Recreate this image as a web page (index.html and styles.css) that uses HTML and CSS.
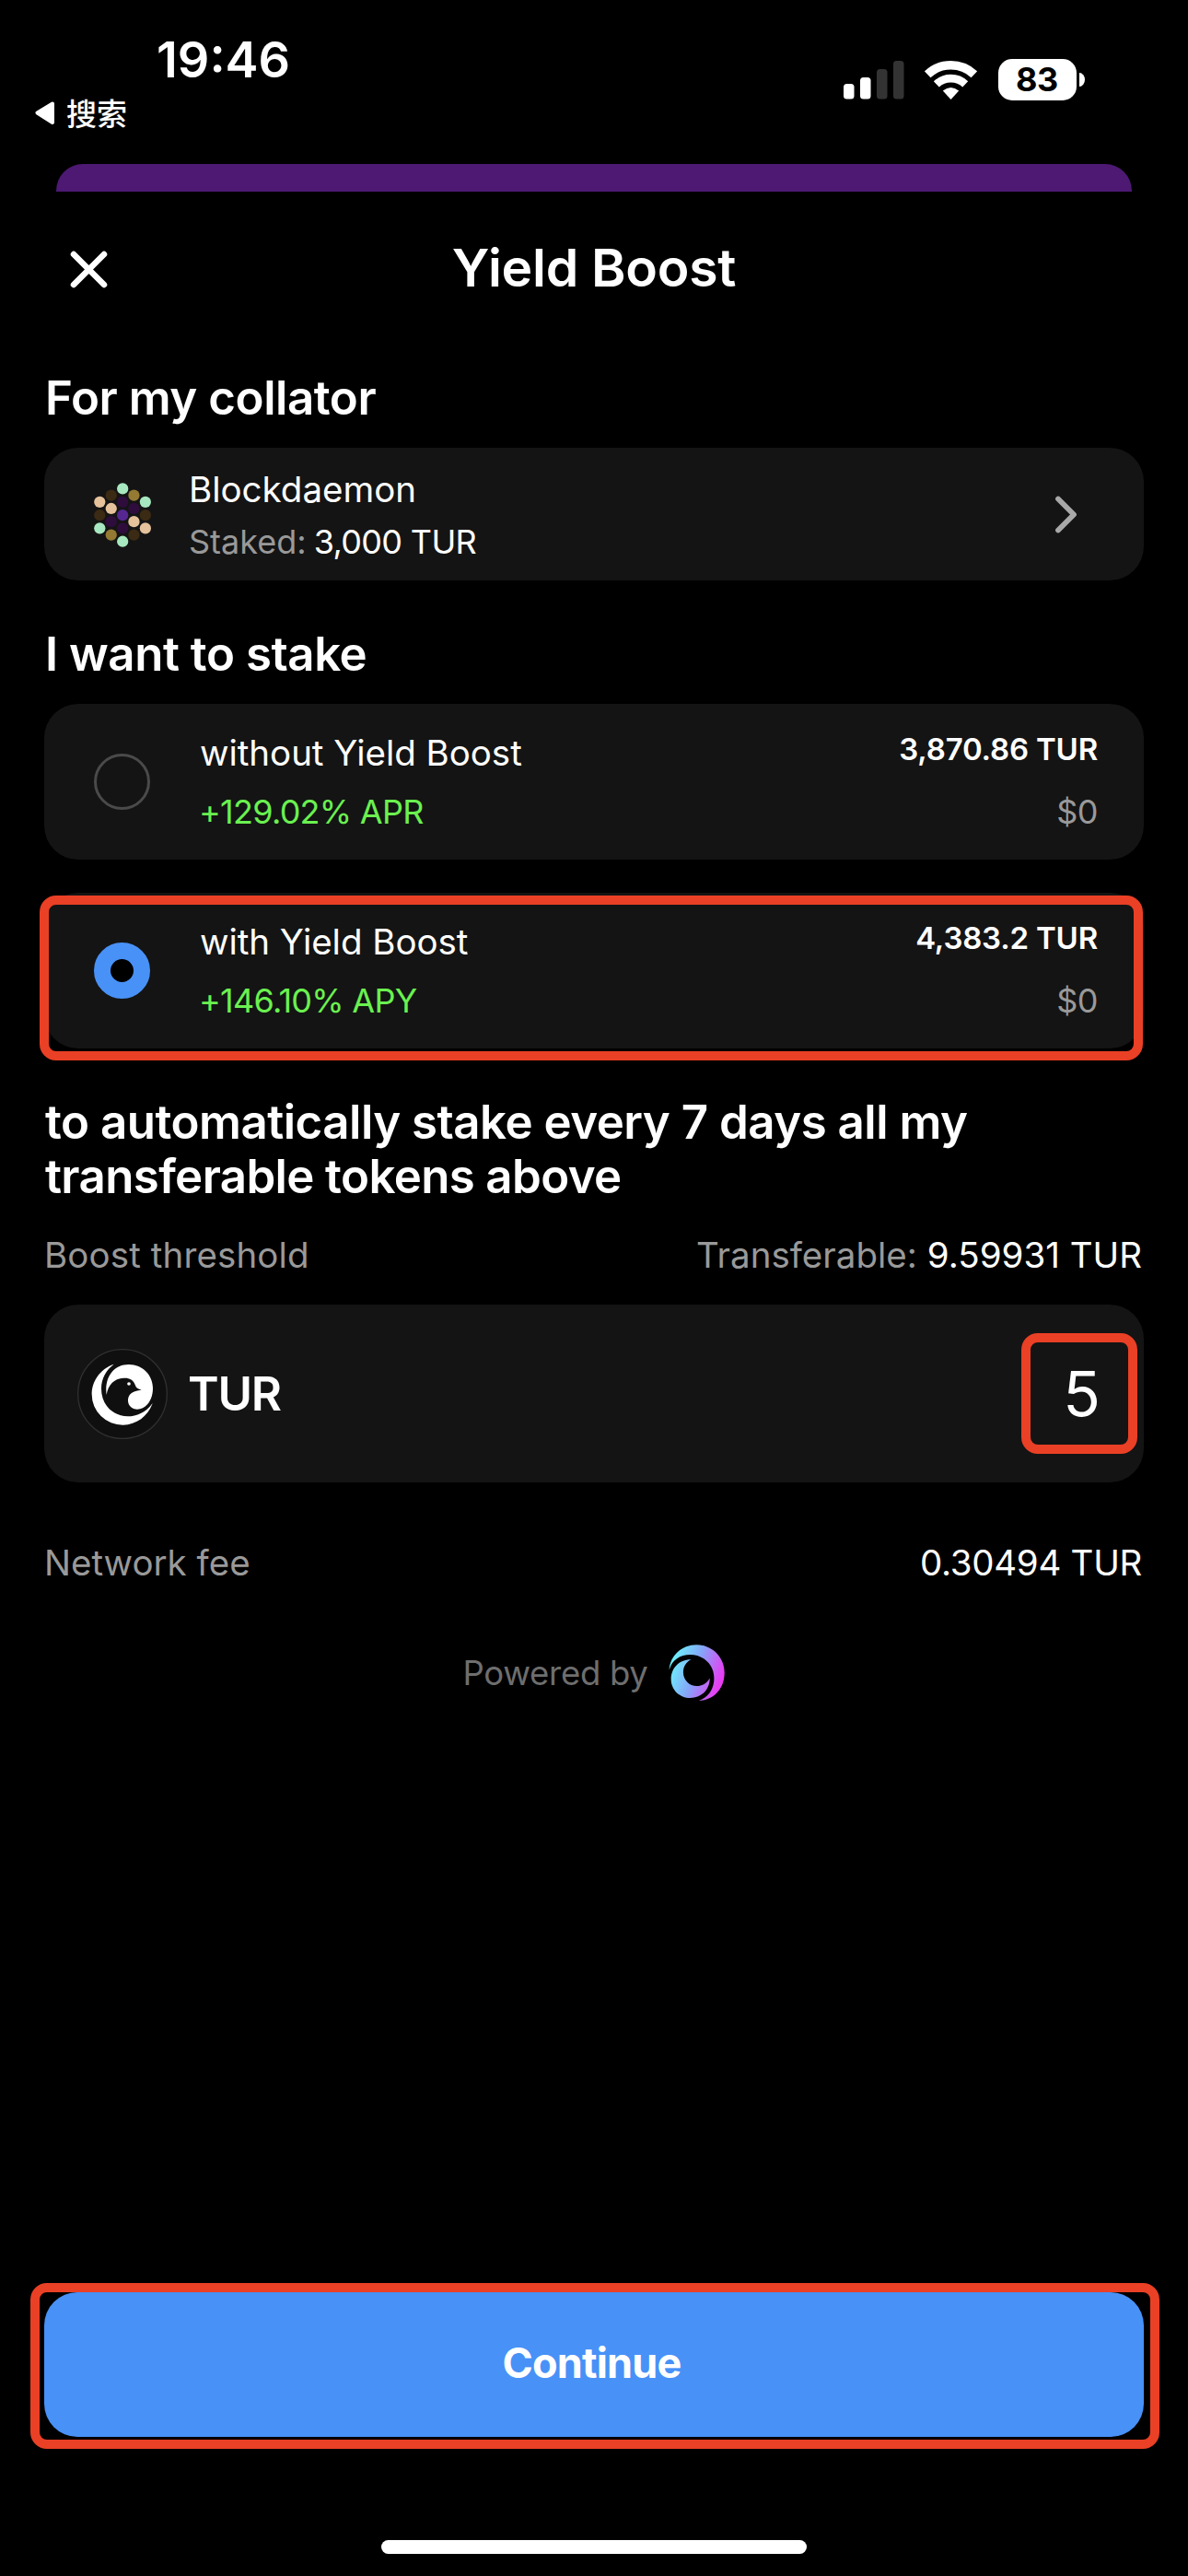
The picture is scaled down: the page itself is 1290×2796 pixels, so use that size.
FILE: index.html
```html
<!DOCTYPE html>
<html lang="en">
<head>
<meta charset="utf-8">
<title>Yield Boost</title>
<link rel="stylesheet" href="styles.css">
</head>
<body>
<div class="screen">
  <div class="status">
    <div class="status-left">
      <div class="time">19:46</div>
      <div class="back">
        <svg width="22" height="26" viewBox="0 0 22 26"><path d="M19 2.5 L2.5 12.5 L19 23 Z" fill="#fff" stroke="#fff" stroke-width="4" stroke-linejoin="round"/></svg>
        <span>搜索</span>
      </div>
    </div>
    <div class="status-right">
      <svg class="signal" width="66" height="42" viewBox="0 0 66 42">
        <rect x="0" y="25" width="11.5" height="16.5" rx="3.5" fill="#fff"/>
        <rect x="18" y="18" width="11.5" height="23.5" rx="3.5" fill="#fff"/>
        <rect x="36" y="9" width="11.5" height="32.5" rx="3.5" fill="#333"/>
        <rect x="54" y="0" width="11.5" height="41.5" rx="3.5" fill="#333"/>
      </svg>
      <svg class="wifi" width="57" height="42" viewBox="0 0 57 42">
        <g fill="none" stroke="#fff">
          <path d="M3.2 14.8 A37 37 0 0 1 53.8 14.8" stroke-width="9.5"/>
          <path d="M12.8 25.4 A22.8 22.8 0 0 1 44.2 25.4" stroke-width="8.6"/>
        </g>
        <path d="M28.5 42 L19.8 32.6 Q28.5 25.2 37.2 32.6 Z" fill="#fff"/>
      </svg>
      <div class="battery">83</div>
      <div class="nub"></div>
    </div>
  </div>
  <div class="behind"></div>

  <header class="header">
    <svg class="close" width="46" height="46" viewBox="0 0 46 46"><path d="M7 7 L40 40 M40 7 L7 40" stroke="#fff" stroke-width="6.5" stroke-linecap="round"/></svg>
    <h1>Yield Boost</h1>
  </header>

  <main class="content">
    <h2 class="h-first">For my collator</h2>
    <section class="card collator">
      <svg class="ident" width="62" height="70" viewBox="69 76 177 199">
        <g fill="#a8e8c0"><circle cx="158" cy="94" r="17.5"/><circle cx="228.500" cy="135" r="17.5"/><circle cx="87" cy="216.500" r="17.5"/><circle cx="158" cy="257.500" r="17.5"/></g>
        <g fill="#e5c29b"><circle cx="87" cy="135" r="17.5"/><circle cx="122.500" cy="155.500" r="17.5"/><circle cx="193" cy="196" r="17.5"/><circle cx="228.500" cy="216.500" r="17.5"/></g>
        <g fill="#3b2a14"><circle cx="122.500" cy="114.500" r="17.5"/><circle cx="87" cy="176" r="17.5"/><circle cx="228.500" cy="176" r="17.5"/><circle cx="193" cy="237" r="17.5"/></g>
        <g fill="#947a32"><circle cx="193" cy="114.500" r="17.5"/><circle cx="122.500" cy="237" r="17.5"/></g>
        <g fill="#2e0d3d"><circle cx="158" cy="135" r="17.5"/><circle cx="193" cy="155.500" r="17.5"/><circle cx="122.500" cy="196" r="17.5"/><circle cx="158" cy="216.500" r="17.5"/></g>
        <circle cx="158" cy="176" r="17.5" fill="#562691"/>
      </svg>
      <div class="who">
        <div class="name">Blockdaemon</div>
        <div class="staked"><span class="muted">Staked:</span><span class="amount">3,000 TUR</span></div>
      </div>
      <svg class="chevron" width="24" height="41" viewBox="0 0 24 41"><path d="M3 3.500 L20 20.500 L3 37.500" fill="none" stroke="#a8a8a8" stroke-width="5.800" stroke-linecap="round" stroke-linejoin="round"/></svg>
    </section>

    <h2 class="h-stake">I want to stake</h2>
    <section class="card option">
      <div class="radio"></div>
      <div class="opt-text">
        <div class="opt-name">without Yield Boost</div>
        <div class="rate">+129.02% APR</div>
      </div>
      <div class="opt-value">
        <div class="total">3,870.86 TUR</div>
        <div class="fiat">$0</div>
      </div>
    </section>
    <section class="card option selected">
      <div class="radio on"></div>
      <div class="opt-text">
        <div class="opt-name">with Yield Boost</div>
        <div class="rate">+146.10% APY</div>
      </div>
      <div class="opt-value">
        <div class="total">4,383.2 TUR</div>
        <div class="fiat">$0</div>
      </div>
      <div class="mark mark-option"></div>
    </section>

    <h2 class="h-period">to automatically stake every 7 days all my<br><span class="tight">transferable tokens above</span></h2>
    <div class="row threshold">
      <span class="label">Boost threshold</span>
      <span class="transferable"><span class="muted">Transferable:</span><span>9.59931 TUR</span></span>
    </div>
    <section class="card input">
      <svg class="token" width="98" height="98" viewBox="41 40 294 294">
        <circle cx="188" cy="187" r="145" fill="#0f0f0f" stroke="#303030" stroke-width="4"/>
        <path d="M160 90 C115 106 88 145 88 188 A101 100 0 0 0 190 288 C235 287 272 258 286 217 C265 246 236 260 205 260 C155 258 119 222 119 170 C119 135 136 108 160 90Z" fill="#fff"/>
        <path d="M136 190 C128 132 160 91 208 91 C255 91 287 127 287 168 C287 210 262 237 236 237 C218 237 206 224 206 208 C206 188 220 177 250 174 C238 171 232 167 229 157 C223 140 210 134 192 135 C160 136 141 158 136 190Z" fill="#fff"/>
        <circle cx="209" cy="154" r="5.500" fill="#fff"/>
      </svg>
      <span class="symbol">TUR</span>
      <span class="value">5</span>
      <div class="mark mark-value"></div>
    </section>
    <div class="row fee">
      <span class="label fee-label">Network fee</span>
      <span class="fee-value">0.30494 TUR</span>
    </div>
    <div class="powered">
      <span>Powered by</span>
      <svg width="61" height="61" viewBox="734 74 184 184">
        <defs><linearGradient id="swirl" gradientUnits="userSpaceOnUse" x1="736" y1="130" x2="905" y2="190"><stop offset="0" stop-color="#6cf8fb"/><stop offset=".5" stop-color="#85a5f8"/><stop offset="1" stop-color="#e83df3"/></linearGradient></defs>
        <path d="M736 157 C739 110 778 75 825 75 C876 75 917 115 917 166 C917 220 881 256 833 258 C866 246 883 218 883 184 C883 140 848 107 805 107 C772 107 745 124 736 157Z" fill="url(#swirl)"/>
        <path d="M808 123 C770 122 742 151 742 187 C742 222 770 249 805 249 C841 249 869 222 869 184 C860 200 845 210 827 210 C802 210 782 190 782 165 C782 147 791 131 808 123Z" fill="url(#swirl)"/>
      </svg>
    </div>
  </main>

  <footer class="footer">
    <div class="button"><span>Continue</span><div class="mark mark-button"></div></div>
    <div class="home"></div>
  </footer>
</div>
</body>
</html>
```
FILE: styles.css
```css
* { box-sizing: border-box; }

body {
  margin: 0;
  background: #000;
  color: #fff;
  font-family: Inter, "Noto Sans CJK SC", sans-serif;
}

svg { display: block; flex: none; }

.screen {
  width: 1290px;
  height: 2796px;
  display: flex;
  flex-direction: column;
  background: #000;
  white-space: nowrap;
}

/* Status bar */
.status {
  height: 178px;
  display: flex;
  justify-content: space-between;
}
.status-left { padding: 35px 0 0 38px; }
.time {
  margin-left: 132px;
  font-size: 54px;
  font-weight: 600;
  line-height: 60px;
}
.back {
  display: flex;
  align-items: center;
  gap: 12px;
  height: 40px;
  margin-top: 7px;
  font: 500 33px/40px "Noto Sans CJK SC", sans-serif;
}
.back svg { margin-top: 1px; }
.status-right {
  display: flex;
  align-items: center;
  height: 45px;
  margin: 64px 112px 0 0;
}
.wifi { margin-left: 22px; }
.battery {
  width: 85px;
  height: 45px;
  margin-left: 23px;
  padding-right: 1px;
  border-radius: 15px;
  background: #fff;
  color: #000;
  font-size: 36px;
  font-weight: 700;
  line-height: 45px;
  letter-spacing: -.4px;
  text-align: center;
}
.nub {
  width: 6px;
  height: 15px;
  margin-left: 3px;
  border-radius: 0 6px 6px 0 / 0 7.5px 7.5px 0;
  background: #fff;
}

.behind {
  height: 30px;
  margin: 0 61px;
  border-radius: 29px 29px 0 0;
  background: #4d1973;
}

/* Header */
.header {
  position: relative;
  height: 166px;
  display: flex;
  align-items: center;
  justify-content: center;
}
.close { position: absolute; left: 73px; top: 61px; }
h1 {
  margin: 0;
  font-size: 57px;
  font-weight: 600;
  line-height: 60px;
  letter-spacing: -.26px;
}

/* Content */
.content { flex: 1; padding: 0 48px; }
h2 {
  margin: 0;
  padding-left: 1px;
  font-size: 51px;
  font-weight: 600;
  line-height: 60px;
  letter-spacing: -.45px;
}
.h-first { height: 112px; padding-top: 28px; }
.h-stake { height: 134px; padding-top: 50px; }
.h-period {
  margin-top: 50px;
  line-height: 59px;
  letter-spacing: -.5px;
}
.tight { letter-spacing: -.63px; }

.card {
  position: relative;
  display: flex;
  border-radius: 37px;
  background: #141414;
}
.muted, .label { color: #999; }

.collator { height: 144px; }
.ident { margin: 38px 0 0 54px; }
.who {
  margin: 25px 0 0 41px;
  line-height: 40px;
}
.name { font-size: 38.5px; }
.staked {
  display: flex;
  gap: 8px;
  margin-top: 17px;
  font-size: 36px;
}
.amount { letter-spacing: -.65px; }
.chevron { margin: 52px 72px 0 auto; }

.option { height: 169px; line-height: 40px; }
.selected { margin-top: 36px; }
.radio {
  width: 61px;
  height: 61px;
  margin: 54px 0 0 54px;
  border: 3px solid #4a4a4a;
  border-radius: 50%;
}
.radio.on {
  border: 18.5px solid #4891f7;
  background: #000;
}
.opt-text { margin: 33px 0 0 54px; }
.opt-name { font-size: 38.5px; letter-spacing: -.03px; }
.rate {
  margin: 24px 0 0 -1px;
  color: #6af150;
  font-size: 36px;
  letter-spacing: -.73px;
}
.opt-value {
  margin: 29px 50px 0 auto;
  text-align: right;
}
.total { font-size: 33px; font-weight: 600; letter-spacing: -.2px; }
.fiat {
  margin-top: 28px;
  color: #999;
  font-size: 36px;
  letter-spacing: -.5px;
}

.row {
  display: flex;
  justify-content: space-between;
  height: 40px;
  font-size: 38.5px;
  line-height: 40px;
}
.threshold { margin-top: 36px; }
.label { letter-spacing: .12px; }
.transferable { display: flex; gap: 11px; margin-right: 2px; }

.input {
  height: 193px;
  margin-top: 34px;
  align-items: center;
}
.token { margin-left: 36px; }
.symbol {
  margin-left: 22px;
  font-size: 51px;
  font-weight: 600;
  letter-spacing: -1.2px;
}
.value {
  margin: 1px 47px 0 auto;
  font-size: 67px;
  line-height: 70px;
}

.fee { margin-top: 67px; }
.fee-label { letter-spacing: 0; }
.fee-value { margin-right: 2px; letter-spacing: -.29px; }

.powered {
  display: flex;
  align-items: center;
  justify-content: center;
  gap: 22px;
  height: 61px;
  margin-top: 69px;
  padding-right: 1px;
  color: #6e6e6e;
  font-size: 36.5px;
  letter-spacing: -.28px;
}

/* Footer */
.footer { padding: 0 48px 24px; }
.button {
  position: relative;
  height: 157px;
  padding-right: 5px;
  border-radius: 36px;
  background: #4891f7;
  font-size: 45px;
  font-weight: 700;
  line-height: 153px;
  letter-spacing: -.8px;
  text-align: center;
}
.home {
  width: 462px;
  height: 15px;
  margin: 112px auto 0;
  border-radius: 8px;
  background: #fff;
}

/* Highlight frames over the controls */
.mark {
  position: absolute;
  border: 10px solid #ea4025;
  border-radius: 18px;
}
.mark-option { left: -5px; top: 3px; width: 1198px; height: 179px; }
.mark-value { left: 1061px; top: 31px; width: 126px; height: 131px; }
.mark-button { left: -15px; top: -10px; width: 1226px; height: 180px; }
```
